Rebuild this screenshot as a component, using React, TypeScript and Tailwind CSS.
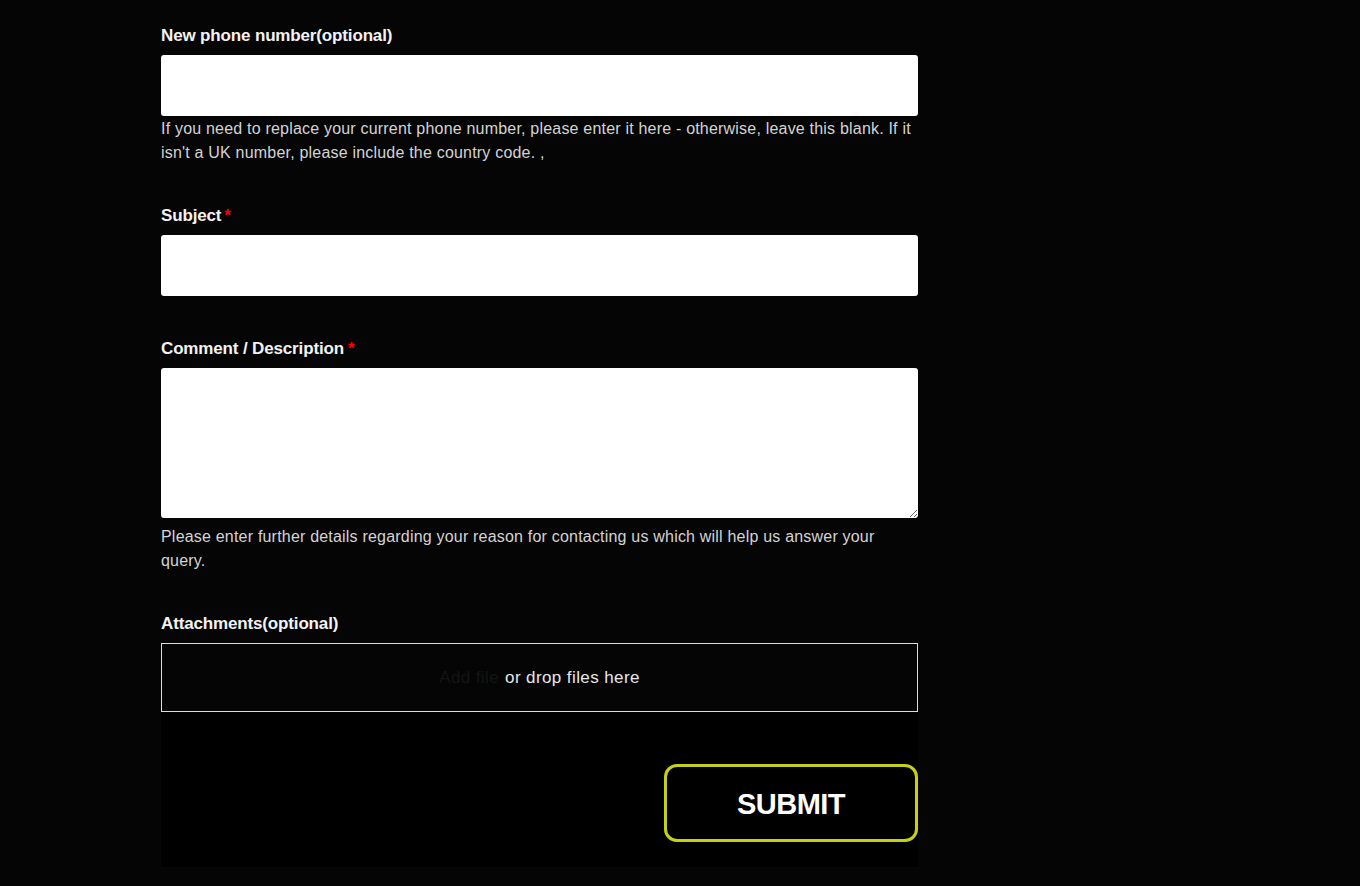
import React from "react";

const labelCls =
  "block text-[17px] font-bold text-[#f2f2f2] tracking-[-0.15px] leading-[20px] mb-[9px]";
const helpCls = "text-[16px] leading-[24px] text-[#d4d4d4] tracking-[0.2px]";

export default function App() {
  return (
    <div
      className="min-h-[886px] w-full bg-[#050505]"
      style={{ fontFamily: '"Liberation Sans", Arial, sans-serif' }}
    >
      <div className="ml-[161px] w-[757px] pt-[26px]">
        <div>
          <label className={labelCls}>New phone number(optional)</label>
          <input className="block h-[61px] w-full rounded-[3px] bg-white outline-none" />
          <p className={`${helpCls} mt-[1px]`}>
            If you need to replace your current phone number, please enter it here - otherwise, leave this blank. If it
            isn't a UK number, please include the country code. ,
          </p>
        </div>

        <div className="mt-[41px]">
          <label className={labelCls}>
            Subject<span className="ml-[3px] text-[#ff0000]">*</span>
          </label>
          <input className="block h-[61px] w-full rounded-[3px] bg-white outline-none" />
        </div>

        <div className="mt-[43px]">
          <label className={labelCls}>
            Comment / Description<span className="ml-[4px] text-[#ff0000]">*</span>
          </label>
          <textarea className="block h-[150px] w-full rounded-[3px] bg-white outline-none" />
          <p className={`${helpCls} mt-[7px]`}>
            Please enter further details regarding your reason for contacting us which will help us answer your
            query.
          </p>
        </div>

        <div className="mt-[41px]">
          <label className={labelCls}>Attachments(optional)</label>
          <div className="flex h-[69px] w-full items-center justify-center border border-[#dcdcdc] text-[17px] tracking-[0.4px]">
            <span className="text-[#141414]">Add file</span>
            <span className="ml-[6px] text-[#e8e8e8]">or drop files here</span>
          </div>
        </div>

        <div className="flex h-[155px] w-full items-start justify-end bg-black pt-[52px]">
          <button className="flex h-[78px] w-[254px] items-center justify-center rounded-[13px] border-[3px] border-[#c9d013] pt-[3px] text-[29px] font-bold tracking-[-0.5px] text-white">
            SUBMIT
          </button>
        </div>
      </div>
    </div>
  );
}
